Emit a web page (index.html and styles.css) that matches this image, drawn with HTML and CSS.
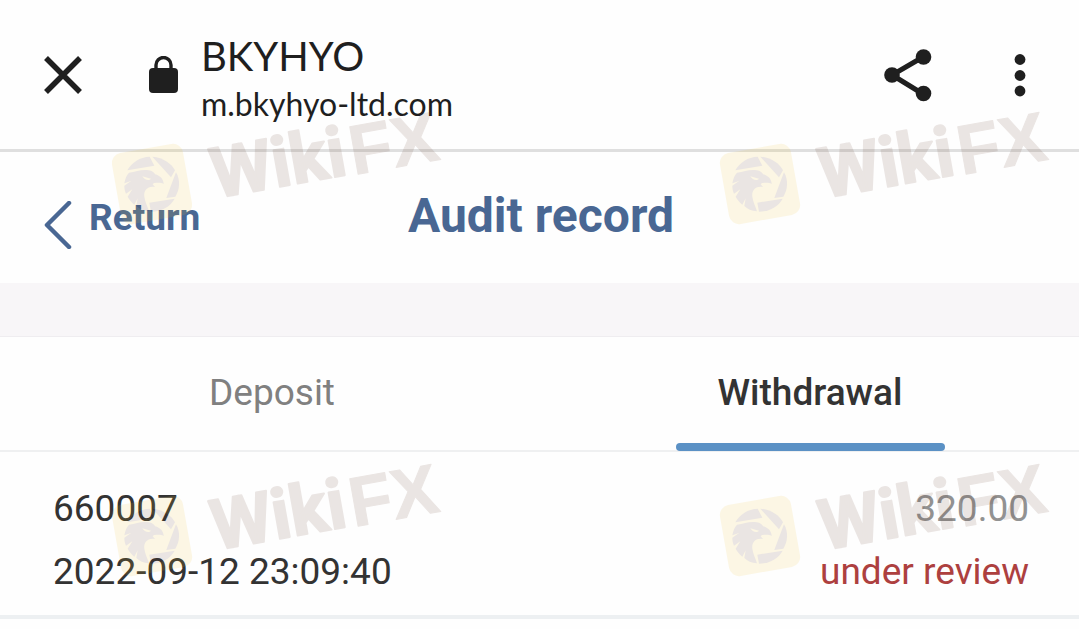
FILE: index.html
```html
<!DOCTYPE html>
<html lang="en">
<head>
  <meta charset="UTF-8">
  <meta name="viewport" content="width=device-width, initial-scale=1.0">
  <title>BKYHYO - Audit record</title>
  <link rel="stylesheet" href="styles.css">
</head>
<body>
  <header class="browser-bar">
    <button class="icon-btn" aria-label="Close">
      <svg width="38" height="38" viewBox="0 0 38 38"><path d="M2 2l34 34M36 2L2 36" fill="none" stroke="currentColor" stroke-width="5.500"/></svg>
    </button>
    <svg class="lock" width="30" height="38" viewBox="0 0 30 38">
      <rect x="1" y="12" width="29" height="25" rx="4" fill="currentColor"/>
      <path d="M8 15V9a7.500 7.500 0 0 1 15 0v6" fill="none" stroke="currentColor" stroke-width="3.400"/>
    </svg>
    <div class="site">
      <div class="site-name">BKYHYO</div>
      <div class="site-url">m.bkyhyo-ltd.com</div>
    </div>
    <button class="icon-btn share" aria-label="Share">
      <svg width="48" height="54" viewBox="0 0 48 54">
        <path d="M39 9L8 27l31 19" fill="none" stroke="currentColor" stroke-width="5"/>
        <circle cx="39.500" cy="9" r="7.800" fill="currentColor"/>
        <circle cx="8" cy="27" r="7.800" fill="currentColor"/>
        <circle cx="39.500" cy="45.500" r="7.800" fill="currentColor"/>
      </svg>
    </button>
    <button class="icon-btn" aria-label="More options">
      <svg width="12" height="44" viewBox="0 0 12 44" fill="currentColor">
        <circle cx="6" cy="6.500" r="5.400"/>
        <circle cx="6" cy="22.500" r="5.400"/>
        <circle cx="6" cy="38" r="5.400"/>
      </svg>
    </button>
  </header>

  <nav class="page-nav">
    <a class="return" href="#">
      <svg class="arrow" width="28" height="48" viewBox="0 0 28 48"><path d="M25 2L3 24l22 22" fill="none" stroke="currentColor" stroke-width="4.500" stroke-linecap="round" stroke-linejoin="round"/></svg>
      <span>Return</span>
    </a>
    <h1>Audit record</h1>
  </nav>

  <div class="spacer"></div>

  <div class="tabs" role="tablist">
    <button class="tab" role="tab" aria-selected="false">Deposit</button>
    <button class="tab active" role="tab" aria-selected="true">Withdrawal</button>
  </div>

  <main>
    <div class="record">
      <div class="record-line">
        <span>660007</span>
        <span class="amount">320.00</span>
      </div>
      <div class="record-line">
        <time datetime="2022-09-12T23:09:40">2022-09-12 23:09:40</time>
        <span class="status">under review</span>
      </div>
    </div>
  </main>

  <!-- watermark, drawn once and repeated -->
  <div class="watermarks" aria-hidden="true">
    <svg class="watermark" viewBox="0 0 340 124">
      <g id="wikifx">
        <g transform="translate(46 78) rotate(-10)">
          <rect x="-36" y="-36" width="72" height="72" rx="10" fill="#eec22e"/>
          <text class="wiki" x="60" y="25">Wiki</text>
          <text class="fx" x="200" y="26">FX</text>
        </g>
        <!-- shutter blades and eagle head -->
        <g transform="translate(46 78) scale(.3333) translate(-181 -163)">
          <path d="M107 122C120 98 145 82 174 81L188 108z"/>
          <path d="M182 81C215 84 240 102 250 122L238 143z"/>
          <path d="M253 128C267 152 264 180 251 201L224 205z"/>
          <path d="M173 219L249 207C236 231 208 246 178 246z"/>
          <path d="M98 161C101 146 105 136 112 129C130 127 144 121 160 121C175 121 187 125 190 134C206 138 216 149 216 163C207 158 199 160 187 160L183 164L190 172C170 167 155 181 158 201C160 217 167 229 172 245C156 244 143 238 134 229L138 206L128 225C120 218 113 210 108 201L122 179L103 192C99 183 98 175 98 168L118 154z"/>
          <path d="M152 140L178 147C173 154 158 152 152 140z" fill="#eec22e"/>
        </g>
      </g>
    </svg>
    <svg class="watermark" viewBox="0 0 340 124"><use href="#wikifx"/></svg>
    <svg class="watermark" viewBox="0 0 340 124"><use href="#wikifx"/></svg>
    <svg class="watermark" viewBox="0 0 340 124"><use href="#wikifx"/></svg>
  </div>
</body>
</html>
```
FILE: styles.css
```css
:root {
  --bg: #fefefe;
  --ink: #1f1f1f;
  --text: #333333;
  --muted: #808080;
  --amount: #929292;
  --blue: #496793;
  --tab-line: #5b91c5;
  --red: #ad403f;
}

* {
  box-sizing: border-box;
}

body {
  position: relative;
  margin: 0;
  min-height: 100vh;
  overflow-x: hidden;
  background: var(--bg);
  color: var(--text);
  font-family: Roboto, "Liberation Sans", sans-serif;
  font-size: 37px;
}

button {
  font: inherit;
  color: inherit;
  background: none;
  border: none;
  padding: 0;
  cursor: pointer;
}

svg {
  display: block;
}

/* browser bar */
.browser-bar {
  display: flex;
  align-items: center;
  height: 152px;
  padding: 0 53px 0 44px;
  border-bottom: 3px solid #dfdfdf;
  color: var(--ink);
}

.lock {
  margin: 0 23px 0 66px;
}

.site {
  flex: 1;
  padding-top: 6px;
  font-family: Lato, "Open Sans", sans-serif;
}

.site-name {
  font-size: 40px;
  line-height: 52px;
}

.site-url {
  font-size: 32px;
  line-height: 44px;
}

.share {
  margin-right: 82px;
}

/* page title */
.page-nav {
  display: grid;
  grid-template-columns: 1fr auto 1fr;
  align-items: center;
  height: 131px;
  padding: 0 41px 0 44px;
  color: var(--blue);
  font-weight: 700;
}

.return {
  display: flex;
  align-items: center;
  gap: 17px;
  color: inherit;
  text-decoration: none;
}

.arrow {
  margin-top: 14px;
}

h1 {
  margin: 0;
  padding-bottom: 4px;
  font-size: 48px;
}

.spacer {
  height: 54px;
  background: #f8f6f8;
  border-bottom: 1px solid #efedf0;
}

/* tabs */
.tabs {
  display: flex;
  height: 115px;
  padding-left: 3px;
  border-bottom: 2px solid #eff0f1;
}

.tab {
  position: relative;
  flex: 1;
  padding-bottom: 2px;
  color: var(--muted);
}

.tab.active {
  color: var(--text);
  font-weight: 500;
}

.tab.active::after {
  content: "";
  position: absolute;
  left: 25%;
  bottom: -1px;
  width: 50%;
  height: 8px;
  border-radius: 4px;
  background: var(--tab-line);
}

/* records */
.record {
  padding: 25px 50px 12px 53px;
  border-bottom: 4px solid #edf0f2;
}

.record-line {
  display: flex;
  justify-content: space-between;
  line-height: 63px;
}

.amount {
  color: var(--amount);
}

.status {
  color: var(--red);
}

/* watermark layer */
.watermarks {
  position: absolute;
  inset: 0;
  display: grid;
  grid-template-columns: 340px 340px;
  grid-auto-rows: 124px;
  gap: 228px 268px;
  padding: 106px 0 0 106px;
  overflow: hidden;
  pointer-events: none;
}

.watermark {
  width: 340px;
  overflow: visible;
  opacity: 0.12;
  fill: #613726;
}

.wiki,
.fx {
  font-weight: 700;
  stroke: #613726;
  stroke-linejoin: round;
}

.wiki {
  font-family: Roboto, sans-serif;
  font-size: 70px;
  stroke-width: 2;
}

.fx {
  font-family: "Liberation Sans", Arial, sans-serif;
  font-size: 70px;
  stroke-width: 1;
}
```
